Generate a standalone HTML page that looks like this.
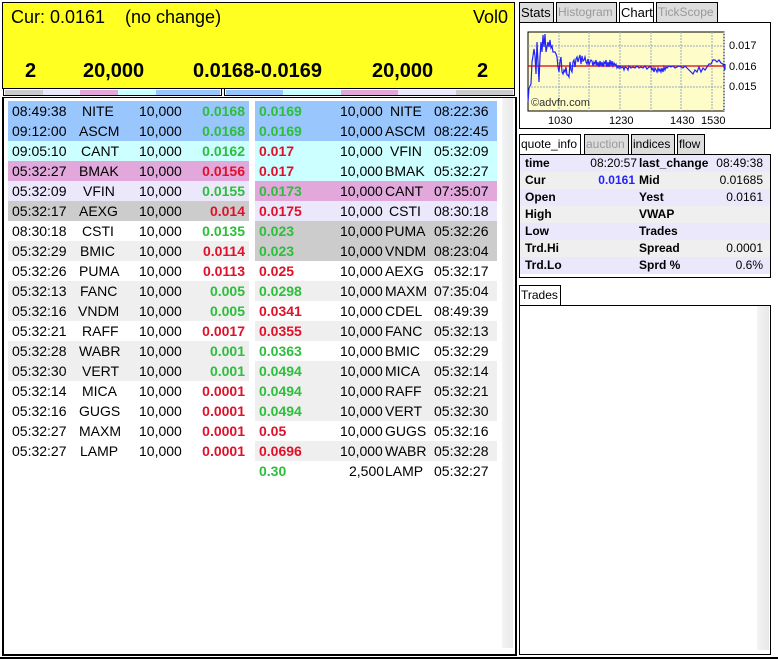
<!DOCTYPE html>
<html><head><meta charset="utf-8"><style>
*{box-sizing:border-box;margin:0;padding:0}
body{width:778px;height:659px;background:#fff;font-family:"Liberation Sans",Arial,sans-serif;position:relative;overflow:hidden;color:#000}
.a{position:absolute}
#hdr{left:2px;top:2px;width:513px;height:87px;background:#ffff22;border:1px solid #000}
.big{font-weight:bold;font-size:20px;top:57px}
.cb{border:1px solid #000;height:8px;top:88px;display:flex;padding:1px}
.cb div{flex:1;height:5px}
#book{left:2px;top:97px;width:515px;height:559px;border:2px solid #000;border-top:1px solid #000}
.tbl{position:absolute;top:3px;font-size:14px}
.r{height:20px;line-height:20px;position:relative}
.r span{position:absolute;top:0}
.g{color:#2bbf3a;font-weight:bold}
.rd{color:#e0102a;font-weight:bold}
.B{background:#99c6fc}.C{background:#ccffff}.P{background:#e2a8dc}.L{background:#ebe8fc}.G{background:#cccccc}.E{background:#efefef}.W{background:#fff}
.sb{background:linear-gradient(90deg,#f4f4f4,#e8e8e8)}
.tab{position:absolute;height:20px;border:1px solid #000;border-bottom:none;font-size:12px;line-height:19px;padding:0 1px;background:#ddd;color:#999;white-space:nowrap;overflow:hidden}
.tab.on{background:#fff;color:#000;height:21px}
.tab.k{color:#000}
.box{position:absolute;left:519px;width:252px;border:1px solid #000;background:#fff}
.qi{font-size:12px}
.qi .r{height:17px;line-height:17px}
.qi b{position:absolute}
</style></head><body>
<div class="a" id="hdr">
<div class="a" style="left:8px;top:4px;font-size:18px">Cur: 0.0161</div>
<div class="a" style="left:122px;top:4px;font-size:18px">(no change)</div>
<div class="a" style="right:6px;top:4px;font-size:18px">Vol0</div>
<div class="a big" style="left:22px">2</div>
<div class="a big" style="left:80px">20,000</div>
<div class="a big" style="left:190px">0.0168-0.0169</div>
<div class="a big" style="left:369px">20,000</div>
<div class="a big" style="left:474px">2</div>
</div>
<div class="a cb" style="left:3px;width:219px"><div style="background:#ccc"></div><div style="background:#ebe8fc"></div><div style="background:#e2a8dc"></div><div style="background:#ccffff"></div><div style="background:#99c6fc;flex:1.7"></div></div>
<div class="a cb" style="left:224px;width:291px"><div style="background:#99c6fc"></div><div style="background:#ccffff"></div><div style="background:#e2a8dc"></div><div style="background:#ebe8fc"></div><div style="background:#ccc"></div></div>

<div class="a" id="book">
<div class="tbl" style="left:4px;width:241px">
<div class="r B"><span style="left:4px">08:49:38</span><span style="left:74px">NITE</span><span style="left:131px">10,000</span><span class="g" style="right:4px">0.0168</span></div>
<div class="r B"><span style="left:4px">09:12:00</span><span style="left:71px">ASCM</span><span style="left:131px">10,000</span><span class="g" style="right:4px">0.0168</span></div>
<div class="r C"><span style="left:4px">09:05:10</span><span style="left:73px">CANT</span><span style="left:131px">10,000</span><span class="g" style="right:4px">0.0162</span></div>
<div class="r P"><span style="left:4px">05:32:27</span><span style="left:71px">BMAK</span><span style="left:131px">10,000</span><span class="rd" style="right:4px">0.0156</span></div>
<div class="r L"><span style="left:4px">05:32:09</span><span style="left:75px">VFIN</span><span style="left:131px">10,000</span><span class="g" style="right:4px">0.0155</span></div>
<div class="r G"><span style="left:4px">05:32:17</span><span style="left:71px">AEXG</span><span style="left:131px">10,000</span><span class="rd" style="right:4px">0.014</span></div>
<div class="r W"><span style="left:4px">08:30:18</span><span style="left:74px">CSTI</span><span style="left:131px">10,000</span><span class="g" style="right:4px">0.0135</span></div>
<div class="r E"><span style="left:4px">05:32:29</span><span style="left:72px">BMIC</span><span style="left:131px">10,000</span><span class="rd" style="right:4px">0.0114</span></div>
<div class="r W"><span style="left:4px">05:32:26</span><span style="left:71px">PUMA</span><span style="left:131px">10,000</span><span class="rd" style="right:4px">0.0113</span></div>
<div class="r E"><span style="left:4px">05:32:13</span><span style="left:72px">FANC</span><span style="left:131px">10,000</span><span class="g" style="right:4px">0.005</span></div>
<div class="r E"><span style="left:4px">05:32:16</span><span style="left:70px">VNDM</span><span style="left:131px">10,000</span><span class="g" style="right:4px">0.005</span></div>
<div class="r W"><span style="left:4px">05:32:21</span><span style="left:74px">RAFF</span><span style="left:131px">10,000</span><span class="rd" style="right:4px">0.0017</span></div>
<div class="r E"><span style="left:4px">05:32:28</span><span style="left:71px">WABR</span><span style="left:131px">10,000</span><span class="g" style="right:4px">0.001</span></div>
<div class="r E"><span style="left:4px">05:32:30</span><span style="left:74px">VERT</span><span style="left:131px">10,000</span><span class="g" style="right:4px">0.001</span></div>
<div class="r W"><span style="left:4px">05:32:14</span><span style="left:74px">MICA</span><span style="left:131px">10,000</span><span class="rd" style="right:4px">0.0001</span></div>
<div class="r W"><span style="left:4px">05:32:16</span><span style="left:71px">GUGS</span><span style="left:131px">10,000</span><span class="rd" style="right:4px">0.0001</span></div>
<div class="r W"><span style="left:4px">05:32:27</span><span style="left:71px">MAXM</span><span style="left:131px">10,000</span><span class="rd" style="right:4px">0.0001</span></div>
<div class="r W"><span style="left:4px">05:32:27</span><span style="left:72px">LAMP</span><span style="left:131px">10,000</span><span class="rd" style="right:4px">0.0001</span></div>
</div>
<div class="tbl" style="left:251px;width:242px">
<div class="r B"><span class="g" style="left:4px">0.0169</span><span style="left:85px">10,000</span><span style="left:135px">NITE</span><span style="left:179px">08:22:36</span></div>
<div class="r B"><span class="g" style="left:4px">0.0169</span><span style="left:85px">10,000</span><span style="left:130px">ASCM</span><span style="left:179px">08:22:45</span></div>
<div class="r C"><span class="rd" style="left:4px">0.017</span><span style="left:85px">10,000</span><span style="left:135px">VFIN</span><span style="left:179px">05:32:09</span></div>
<div class="r C"><span class="rd" style="left:4px">0.017</span><span style="left:85px">10,000</span><span style="left:130px">BMAK</span><span style="left:179px">05:32:27</span></div>
<div class="r P"><span class="g" style="left:4px">0.0173</span><span style="left:85px">10,000</span><span style="left:130px">CANT</span><span style="left:179px">07:35:07</span></div>
<div class="r L"><span class="rd" style="left:4px">0.0175</span><span style="left:85px">10,000</span><span style="left:134px">CSTI</span><span style="left:179px">08:30:18</span></div>
<div class="r G"><span class="g" style="left:4px">0.023</span><span style="left:85px">10,000</span><span style="left:130px">PUMA</span><span style="left:179px">05:32:26</span></div>
<div class="r G"><span class="g" style="left:4px">0.023</span><span style="left:85px">10,000</span><span style="left:130px">VNDM</span><span style="left:179px">08:23:04</span></div>
<div class="r W"><span class="rd" style="left:4px">0.025</span><span style="left:85px">10,000</span><span style="left:130px">AEXG</span><span style="left:179px">05:32:17</span></div>
<div class="r E"><span class="g" style="left:4px">0.0298</span><span style="left:85px">10,000</span><span style="left:130px">MAXM</span><span style="left:179px">07:35:04</span></div>
<div class="r W"><span class="rd" style="left:4px">0.0341</span><span style="left:85px">10,000</span><span style="left:130px">CDEL</span><span style="left:179px">08:49:39</span></div>
<div class="r E"><span class="rd" style="left:4px">0.0355</span><span style="left:85px">10,000</span><span style="left:130px">FANC</span><span style="left:179px">05:32:13</span></div>
<div class="r W"><span class="g" style="left:4px">0.0363</span><span style="left:85px">10,000</span><span style="left:130px">BMIC</span><span style="left:179px">05:32:29</span></div>
<div class="r E"><span class="g" style="left:4px">0.0494</span><span style="left:85px">10,000</span><span style="left:130px">MICA</span><span style="left:179px">05:32:14</span></div>
<div class="r E"><span class="g" style="left:4px">0.0494</span><span style="left:85px">10,000</span><span style="left:130px">RAFF</span><span style="left:179px">05:32:21</span></div>
<div class="r E"><span class="g" style="left:4px">0.0494</span><span style="left:85px">10,000</span><span style="left:130px">VERT</span><span style="left:179px">05:32:30</span></div>
<div class="r W"><span class="rd" style="left:4px">0.05</span><span style="left:85px">10,000</span><span style="left:130px">GUGS</span><span style="left:179px">05:32:16</span></div>
<div class="r E"><span class="rd" style="left:4px">0.0696</span><span style="left:85px">10,000</span><span style="left:130px">WABR</span><span style="left:179px">05:32:28</span></div>
<div class="r W"><span class="g" style="left:4px">0.30</span><span style="left:94px">2,500</span><span style="left:130px">LAMP</span><span style="left:179px">05:32:27</span></div>
</div>
<div class="a sb" style="left:498px;top:0;width:11px;height:550px"></div>
</div>

<!-- right panel -->
<div class="tab k" style="left:519px;top:2px;width:35px;font-size:13px">Stats</div>
<div class="tab" style="left:556px;top:2px;width:61px">Histogram</div>
<div class="tab on" style="left:619px;top:2px;width:35px;font-size:13px">Chart</div>
<div class="tab" style="left:656px;top:2px;width:62px">TickScope</div>
<div class="box" style="top:22px;height:107px">
<svg width="252" height="107" style="position:absolute;left:-1px;top:-1px" font-family="Liberation Sans, Arial, sans-serif" font-size="11">
<rect x="9" y="10" width="196" height="79" fill="#fefcc8" stroke="#000"/>
<g stroke="#9ab" stroke-width="1" stroke-dasharray="2,1">
<line x1="40" y1="10" x2="40" y2="89"/><line x1="70" y1="10" x2="70" y2="89"/><line x1="101" y1="10" x2="101" y2="89"/><line x1="132" y1="10" x2="132" y2="89"/><line x1="162" y1="10" x2="162" y2="89"/><line x1="193" y1="10" x2="193" y2="89"/><line x1="205" y1="10" x2="205" y2="89"/>
<line x1="9" y1="24" x2="205" y2="24"/><line x1="9" y1="44" x2="205" y2="44"/><line x1="9" y1="65" x2="205" y2="65"/>
</g>
<line x1="9" y1="44" x2="205" y2="44" stroke="#d00" stroke-width="1.2"/>
<polyline fill="none" stroke="#22f" stroke-width="1.2" points="9,80 10,66 12,62 13,40 14,34 15,27 16,34 17,52 18,20 19,40 20,60 21,35 22,20 23,30 24,13 25,25 26,12 27,30 28,25 29,20 30,25 31,18 32,26 33,24 34,30 36,30 37,32 38,35 39,45 40,50 41,40 42,35 43,50 44,52 45,48 46,50 47,45 48,53 49,53 50,55 51,40 52,48 53,50 54,40 55,38 56,45 57,37 58,35 59,40 60,36 61,33 62,42 63,34 64,39 65,38 66,35 67,40 68,42 69,37 70,43 71,40 72,38 73,39 74,44 75,40 76,42 77,38 78,44 79,40 80,45 81,39 82,44 83,40 84,45 85,40 86,42 87,38 88,45 89,40 90,45 91,38 92,44 93,39 94,44 95,41 96,43 97,42 98,46 99,44 100,46 101,44 102,46 104,45 105,48 106,45 108,46 109,48 110,44 112,46 114,45 116,46 118,44 120,46 122,45 124,46 126,44 128,47 130,45 132,45 133,48 134,46 135,50 136,46 137,48 138,50 139,46 140,49 141,47 142,50 143,46 144,50 145,45 146,48 147,45 148,46 150,44 152,45 154,44 156,46 158,45 160,44 162,45 164,46 166,44 168,46 170,48 172,50 174,52 176,48 178,50 180,45 182,50 184,46 186,48 188,45 190,42 192,42 194,38 196,38 198,40 200,38 202,41 204,42 205,45 206,48 206,42"/>
<text x="12" y="84" fill="#333" font-size="11">©advfn.com</text>
<text x="210" y="27" fill="#000">0.017</text>
<text x="210" y="48" fill="#000">0.016</text>
<text x="210" y="68" fill="#000">0.015</text>
<text x="29" y="102" fill="#000">1030</text>
<text x="90" y="102" fill="#000">1230</text>
<text x="151" y="102" fill="#000">1430</text>
<text x="182" y="102" fill="#000">1530</text>
</svg>
</div>

<div class="tab on" style="left:519px;top:134px;width:62px">quote_info</div>
<div class="tab" style="left:584px;top:134px;width:45px">auction</div>
<div class="tab k" style="left:631px;top:134px;width:44px">indices</div>
<div class="tab k" style="left:677px;top:134px;width:28px">flow</div>
<div class="box qi" style="top:154px;height:124px;padding-top:0">
<div class="r L"><b style="left:5px">time</b><span style="right:133px">08:20:57</span><b style="left:119px">last_change</b><span style="right:7px">08:49:38</span></div>
<div class="r E"><b style="left:5px">Cur</b><b style="right:135px;color:#22f">0.0161</b><b style="left:119px">Mid</b><span style="right:7px">0.01685</span></div>
<div class="r L"><b style="left:5px">Open</b><b style="left:119px">Yest</b><span style="right:7px">0.0161</span></div>
<div class="r E"><b style="left:5px">High</b><b style="left:119px">VWAP</b></div>
<div class="r L"><b style="left:5px">Low</b><b style="left:119px">Trades</b></div>
<div class="r E"><b style="left:5px">Trd.Hi</b><b style="left:119px">Spread</b><span style="right:7px">0.0001</span></div>
<div class="r L"><b style="left:5px">Trd.Lo</b><b style="left:119px">Sprd %</b><span style="right:7px">0.6%</span></div>
</div>

<div class="tab on k" style="left:519px;top:285px;width:42px">Trades</div>
<div class="box" style="top:305px;height:350px">
<div class="a sb" style="left:237px;top:0;width:12px;height:344px"></div>
</div>
<div class="a" style="left:0;top:657px;width:778px;height:2px;background:#000"></div>
</body></html>
